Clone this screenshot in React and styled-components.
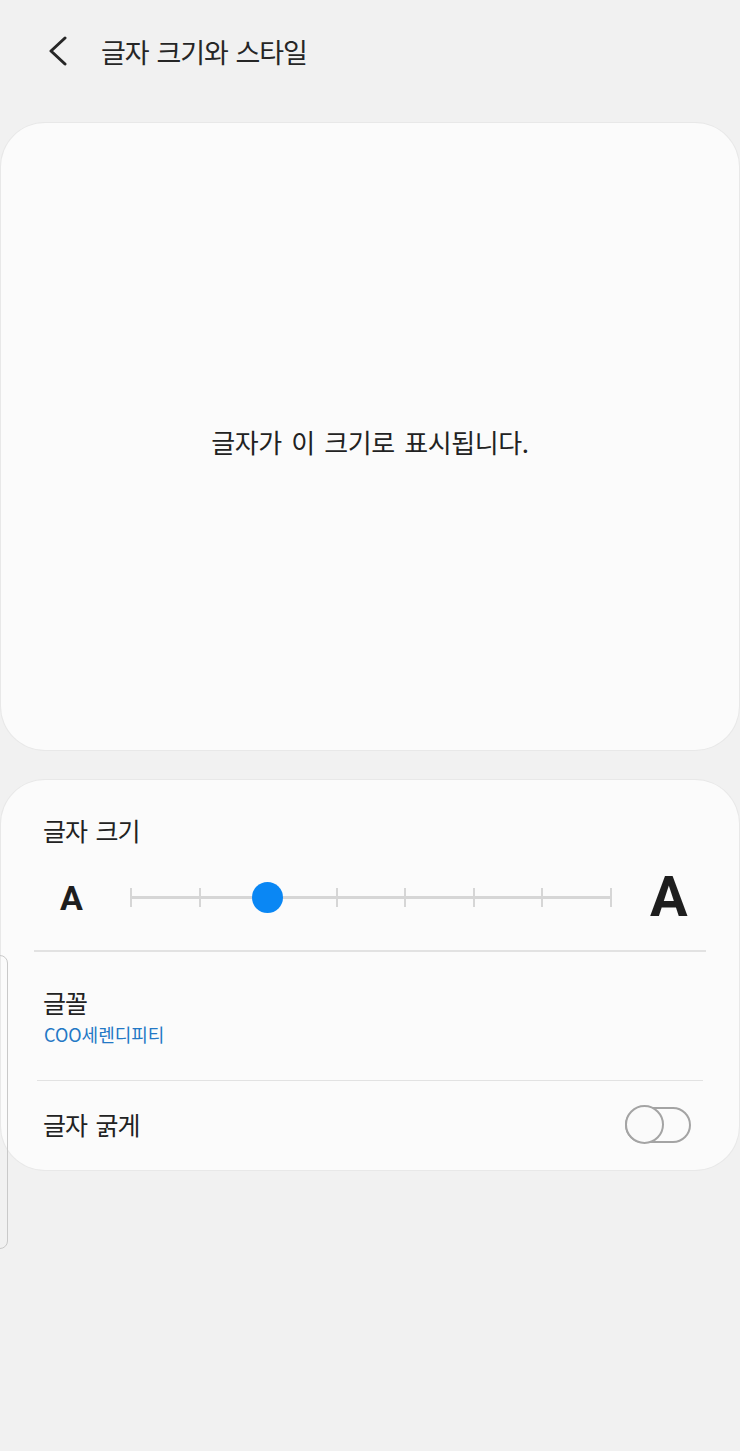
import React from "react";
import styled, { createGlobalStyle } from "styled-components";

const Global = createGlobalStyle`
  html, body { margin: 0; padding: 0; background: #f1f1f1; }
  body { font-family: "Noto Sans CJK KR", "Noto Sans", sans-serif; color: #222; }
  #root { min-height: 1451px; }
`;

const Page = styled.div`
  position: relative;
  height: 1451px;
  overflow: hidden;
  background: #f1f1f1;
  display: flex;
  flex-direction: column;
`;

const Header = styled.header`
  height: 102px;
  display: flex;
  align-items: center;
  padding-left: 44px;
  gap: 29px;
  margin-bottom: 21px;
`;

const BackButton = styled.button`
  border: 0;
  background: none;
  padding: 0;
  width: 28px;
  height: 32px;
  display: flex;
  align-items: center;
  justify-content: center;
`;

const Title = styled.h1`
  margin: 0;
  font-size: 27px;
  font-weight: 400;
  letter-spacing: -1.1px;
  word-spacing: 3px;
  color: #262626;
`;

const Card = styled.section`
  margin: 0 1px;
  background: #fbfbfb;
  border-radius: 44px;
  box-shadow: 0 0 0 1px #e8e8e8;
`;

const PreviewCard = styled(Card)`
  height: 627px;
  display: flex;
  align-items: center;
  justify-content: center;
  margin-bottom: 30px;
`;

const PreviewText = styled.p`
  margin: 10px 0 0 0;
  font-size: 26px;
  letter-spacing: -0.4px;
  word-spacing: 4px;
  color: #222;
`;

const SettingsCard = styled(Card)`
  height: 390px;
  display: flex;
  flex-direction: column;
`;

const SizeSection = styled.div`
  padding-top: 32px;
  display: flex;
  flex-direction: column;
`;

const Label = styled.div`
  font-size: 25px;
  line-height: 36px;
  letter-spacing: -1px;
  word-spacing: 4px;
  color: #222;
  padding-left: 42px;
`;

const SliderRow = styled.div`
  margin-top: 19px;
  height: 60px;
  display: grid;
  grid-template-columns: 130px 481px 1fr;
  align-items: center;
`;

const SmallA = styled.span`
  font-family: Roboto, "Noto Sans", sans-serif;
  font-weight: 700;
  font-size: 34px;
  padding-left: 59px;
  color: #1e1e1e;
  line-height: 1;
  margin-top: 2px;
`;

const LargeA = styled.span`
  font-family: Roboto, "Noto Sans", sans-serif;
  font-weight: 700;
  font-size: 56px;
  padding-left: 38px;
  color: #1e1e1e;
  line-height: 1;
`;

const Track = styled.div`
  position: relative;
  height: 20px;
  display: flex;
  justify-content: space-between;
  align-items: center;
  background: linear-gradient(#d6d6d6, #d6d6d6) center / 100% 3px no-repeat;
  margin-left: -1px;
`;

const Tick = styled.span`
  width: 2px;
  height: 19px;
  background: #d6d6d6;
`;

const Thumb = styled.span`
  position: absolute;
  top: 50%;
  width: 31px;
  height: 31px;
  margin: -15.5px 0 0 -15.5px;
  border-radius: 50%;
  background: #0a87f4;
`;

const Divider = styled.hr`
  border: 0;
  height: 1.5px;
  background: #e2e2e2;
  margin: 0 ${(p) => p.$inset}px;
`;

const FontRow = styled.div`
  height: 126px;
  display: flex;
  flex-direction: column;
  justify-content: center;
  padding-bottom: 2px;
`;

const SubValue = styled.div`
  font-size: 18px;
  letter-spacing: 0px;
  color: #2378c5;
  padding-left: 43px;
  line-height: 24px;
  margin-top: 2px;
`;

const ToggleRow = styled.div`
  flex: 1;
  display: flex;
  align-items: center;
  justify-content: space-between;
  padding-right: 48px;
  padding-bottom: 4px;
`;

const Switch = styled.span`
  position: relative;
  width: 62px;
  height: 32px;
  border: 2px solid #a4a4a4;
  border-radius: 18px;
  display: block;
  margin-top: 2px;
`;

const SwitchKnob = styled.span`
  position: absolute;
  left: -2px;
  top: -4px;
  width: 35px;
  height: 35px;
  border: 2px solid #a4a4a4;
  border-radius: 50%;
  background: #fafafa;
`;

const EdgeHandle = styled.div`
  position: absolute;
  left: -20px;
  top: 955px;
  width: 26px;
  height: 292px;
  border: 1.5px solid #c9c9c9;
  border-radius: 8px;
`;

const ticks = Array.from({ length: 8 });
const sizeIndex = 2;

export default function App() {
  return (
    <>
      <Global />
      <Page>
        <Header>
          <BackButton aria-label="back">
            <svg width="22" height="30" viewBox="0 0 22 30">
              <polyline points="18,2 4,15 18,28" fill="none" stroke="#262626" strokeWidth="3" strokeLinecap="round" strokeLinejoin="round" />
            </svg>
          </BackButton>
          <Title>글자 크기와 스타일</Title>
        </Header>

        <PreviewCard>
          <PreviewText>글자가 이 크기로 표시됩니다.</PreviewText>
        </PreviewCard>

        <SettingsCard>
          <SizeSection>
            <Label>글자 크기</Label>
            <SliderRow>
              <SmallA>A</SmallA>
              <Track>
                {ticks.map((_, i) => (
                  <Tick key={i} />
                ))}
                <Thumb style={{ left: `${(sizeIndex / (ticks.length - 1)) * 100}%` }} />
              </Track>
              <LargeA>A</LargeA>
            </SliderRow>
          </SizeSection>
          <Divider $inset={33} style={{ marginTop: 23 }} />
          <FontRow>
            <Label>글꼴</Label>
            <SubValue>COO세렌디피티</SubValue>
          </FontRow>
          <Divider $inset={36} />
          <ToggleRow>
            <Label>글자 굵게</Label>
            <Switch>
              <SwitchKnob />
            </Switch>
          </ToggleRow>
        </SettingsCard>
        <EdgeHandle />
      </Page>
    </>
  );
}
